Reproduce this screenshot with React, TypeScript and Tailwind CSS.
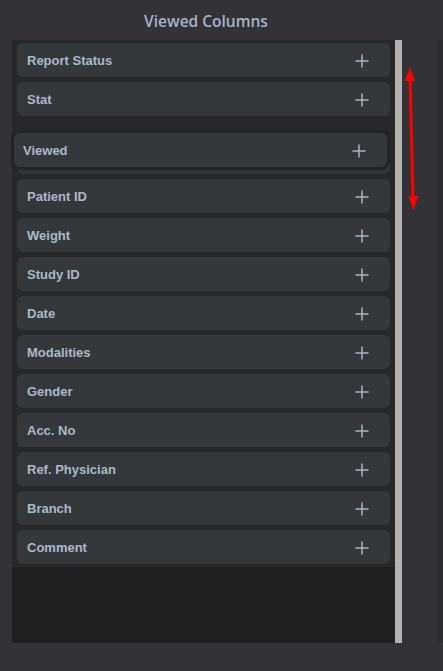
import React from "react";

const columns = [
    "Patient ID",
    "Weight",
    "Study ID",
    "Date",
    "Modalities",
    "Gender",
    "Acc. No",
    "Ref. Physician",
    "Branch",
    "Comment",
];

const PlusIcon: React.FC = () => (
    <svg width="14" height="14" viewBox="0 0 14 14" className="shrink-0">
        <path d="M7 0.5V13.5M0.5 7H13.5" stroke="#a7b4c6" strokeWidth="1.5" />
    </svg>
);

const Row: React.FC<{label: string}> = ({label}) => (
    <div className="h-[34px] rounded-md bg-[#35383b] flex items-center justify-between pl-[10px] pr-[21px] pt-[2px]">
        <span className="text-[13px] font-bold text-[#a9b8cd]">{label}</span>
        <PlusIcon />
    </div>
);

const App: React.FC = () => {
    return (
        <div
            className="w-[443px] h-[671px] bg-[#333337] relative overflow-hidden"
            style={{fontFamily: '"Liberation Sans", Arial, sans-serif'}}>
            <div
                className="h-[40px] w-[412px] pt-[3px] flex items-center justify-center text-[15.5px] font-semibold text-[#a4b3ca]"
                style={{fontFamily: '"Open Sans", "Noto Sans", sans-serif'}}>
                Viewed Columns
            </div>
            <div className="flex h-[603px]">
                <div className="ml-[12px] w-[383px] bg-[#1f2022] flex flex-col">
                    <div className="relative bg-[#27282b] px-[5px] pt-[3px] pb-[3px] flex flex-col gap-[5px]">
                        <Row label="Report Status" />
                        <Row label="Stat" />
                        <div className="h-[34px] mt-[19px] rounded-md bg-[#35383b]" />
                        {columns.map((c) => (
                            <Row key={c} label={c} />
                        ))}
                        <div className="absolute left-[2px] top-[93px] w-[373px] h-[34px] rounded-md bg-[#35383b] shadow-[0_0_0_3px_#232427,0_2px_4px_rgba(0,0,0,0.4)] flex items-center justify-between pl-[9px] pr-[21px] pt-[2px]">
                            <span className="text-[13px] font-bold text-[#a9b8cd]">Viewed</span>
                            <PlusIcon />
                        </div>
                    </div>
                </div>
                <div className="w-[7px] bg-[#b3b3b3]" />
                <div className="w-[35px]" />
                <div className="w-[6px] bg-[#2c2c31]" />
            </div>
            <svg
                className="absolute left-[400px] top-[60px]"
                width="24"
                height="160"
                viewBox="0 0 24 160">
                <line x1="10" y1="14" x2="13" y2="138" stroke="#ff0000" strokeWidth="3" />
                <polygon points="10,7 5,21 15,21" fill="#ff0000" />
                <polygon points="13.5,150 8.5,136 18.5,136" fill="#ff0000" />
            </svg>
        </div>
    );
};

export default App;
